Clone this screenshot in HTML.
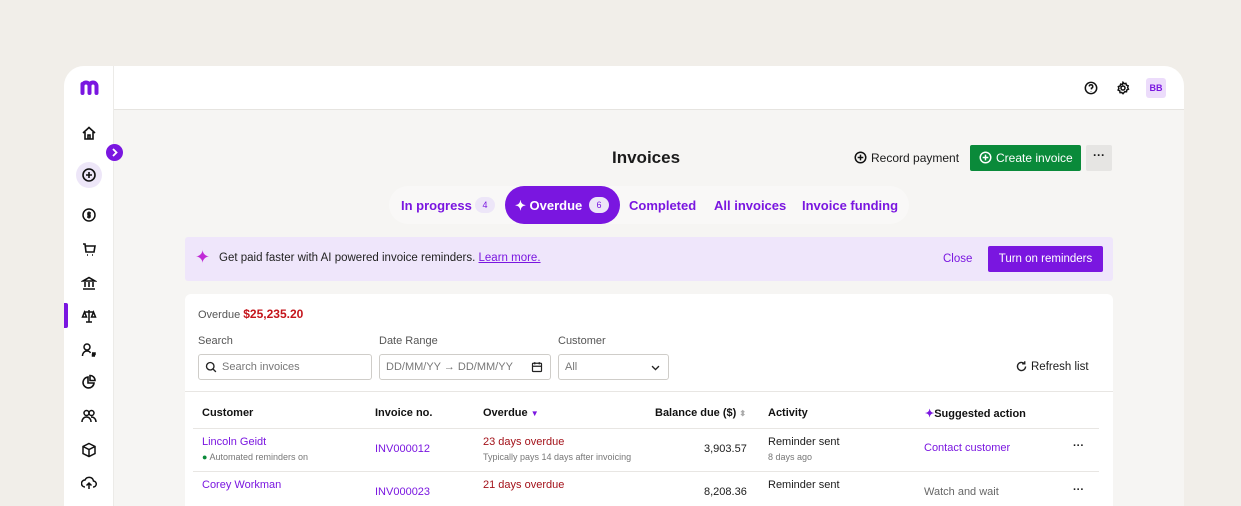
<!DOCTYPE html>
<html><head><meta charset="utf-8"><style>
*{box-sizing:border-box;margin:0;padding:0}
body{width:1241px;height:498px;overflow:hidden;background:#f1eee9;font-family:"Liberation Sans",sans-serif;color:#1b1b1b;position:relative}
.frame{position:absolute;left:64px;top:66px;width:1120px;height:440px;background:#f6f5f3;border-radius:20px 20px 0 0;overflow:hidden}
.side{position:absolute;left:0;top:0;width:50px;height:440px;background:#fff;border-right:1px solid #ecebe8}
.top{position:absolute;left:50px;top:0;right:0;height:44px;background:#fff;border-bottom:1px solid #e6e4e0}
.ic{position:absolute;left:17px;width:16px;height:16px}
.abs{position:absolute}
.purple{color:#7a16e0}
.tabs{position:absolute;left:325px;top:120px;width:520px;height:38px;background:#f9f8f7;border-radius:19px}
.tab{position:absolute;top:12px;font-size:13px;font-weight:bold;color:#7a16e0}
.banner{position:absolute;left:121px;top:171px;width:928px;height:44px;background:#efe6fb;border-radius:3px}
.card{position:absolute;left:121px;top:228px;width:928px;height:230px;background:#fff;border-radius:6px}
.lbl{position:absolute;font-size:11px;color:#555}
.inp{position:absolute;top:60px;height:26px;border:1px solid #cfcdc9;border-radius:3px;font-size:11px;color:#777;padding:6px 6px}
.th{position:absolute;top:113px;font-size:11px;font-weight:bold;color:#111}
.c{position:absolute;font-size:11px}
.s{position:absolute;font-size:9px;color:#777}
</style></head><body>
<div class="frame">
 <div class="side">
  <svg class="abs" style="left:16px;top:14px" width="20" height="15" viewBox="0 0 20 15" fill="none" stroke="#7a16e0" stroke-width="4" stroke-linecap="round"><path d="M2.5 13V6a3.5 3.5 0 0 1 7 0v7M9.5 6a3.5 3.5 0 0 1 7 0v7M2.5 4v9"/></svg>
  <svg class="ic" style="top:59px" viewBox="0 0 16 16" fill="none" stroke="#111" stroke-width="1.6"><path d="M2 8L8 2.5 14 8M4 7v7h8V7M7 14v-4h2v4"/></svg>
  <div class="abs" style="left:12px;top:96px;width:26px;height:26px;border-radius:13px;background:#ede6f8"></div>
  <svg class="ic" style="top:101px" viewBox="0 0 16 16" fill="none" stroke="#111" stroke-width="1.6"><circle cx="8" cy="8" r="6"/><path d="M8 5v6M5 8h6"/></svg>
  <svg class="ic" style="top:141px" viewBox="0 0 16 16" fill="none" stroke="#111" stroke-width="1.5"><circle cx="8" cy="8" r="6"/><path d="M10 6H7v2h2v2H6M8 4.5v7"/></svg>
  <svg class="ic" style="top:175px" viewBox="0 0 16 16" fill="none" stroke="#111" stroke-width="1.6"><path d="M2 3h2l1 8h8l1-6H5M6 14h1M11 14h1"/></svg>
  <svg class="ic" style="top:209px" viewBox="0 0 16 16" fill="none" stroke="#111" stroke-width="1.6"><path d="M2 6L8 2.5 14 6zM4 7v5M8 7v5M12 7v5M2 14h12"/></svg>
  <div class="abs" style="left:0;top:237px;width:4px;height:25px;background:#7a16e0;border-radius:0 2px 2px 0"></div>
  <svg class="ic" style="top:242px" viewBox="0 0 16 16" fill="none" stroke="#111" stroke-width="1.5"><path d="M8 2v12M3 4h10M5 14h6M1.5 9l2-5 2 5zM10.5 9l2-5 2 5z"/></svg>
  <svg class="ic" style="top:276px" viewBox="0 0 16 16" fill="none" stroke="#111" stroke-width="1.5"><circle cx="6" cy="5" r="3"/><path d="M1.5 14c0-3 2-5 4.5-5s3 1 3.5 2M11 11h3v1.5h-2.5V14H14"/></svg>
  <svg class="ic" style="top:308px" viewBox="0 0 16 16" fill="none" stroke="#111" stroke-width="1.6"><path d="M7 3a5.5 5.5 0 1 0 6 6H7zM9 1.5v5h5a5 5 0 0 0-5-5z"/></svg>
  <svg class="ic" style="top:342px" viewBox="0 0 16 16" fill="none" stroke="#111" stroke-width="1.5"><circle cx="5.5" cy="5" r="2.5"/><circle cx="10.5" cy="5" r="2.5"/><path d="M1 14c0-3 2-5 4.5-5s4.5 2 4.5 5M10 9c3 0 5 2 5 5"/></svg>
  <svg class="ic" style="top:376px" viewBox="0 0 16 16" fill="none" stroke="#111" stroke-width="1.5"><path d="M8 1.5l6 3v7l-6 3-6-3v-7zM2 4.5l6 3 6-3M8 7.5v7"/></svg>
  <svg class="ic" style="top:409px" viewBox="0 0 16 16" fill="none" stroke="#111" stroke-width="1.5"><path d="M4 12a3.5 3.5 0 0 1 0-7 4.5 4.5 0 0 1 8.5 1A3 3 0 0 1 12 12M8 14V8M5.5 10.5L8 8l2.5 2.5"/></svg>
 </div>
 <div class="top">
  <svg class="abs" style="left:970px;top:15px" width="14" height="14" viewBox="0 0 16 16" fill="none" stroke="#111" stroke-width="1.7"><circle cx="8" cy="8" r="6.5"/><path d="M6 6.2a2 2 0 1 1 2.5 2V9.5M8 11.5v.5"/></svg>
  <svg class="abs" style="left:1002px;top:15px" width="14" height="14" viewBox="0 0 16 16" fill="none" stroke="#111" stroke-width="1.7"><circle cx="8" cy="8" r="2.3"/><path d="M8 1.5l1.3 1.6 2-.4.6 2 2 .8-.6 2 .9 1.9-1.9.9-.3 2-2-.1L8 14.5l-1.4-1.4-2 .1-.3-2-1.9-.9.9-1.9-.6-2 2-.8.6-2 2 .4z"/></svg>
  <div class="abs" style="left:1032px;top:12px;width:20px;height:20px;background:#ecdcfb;border-radius:3px;font-size:9px;font-weight:bold;color:#7a16e0;text-align:center;line-height:20px">BB</div>
 </div>
 <div class="abs" style="left:42px;top:78px;width:17px;height:17px;border-radius:9px;background:#7a16e0"><svg width="17" height="17" viewBox="0 0 17 17" fill="none" stroke="#fff" stroke-width="1.8"><path d="M7 5l3.5 3.5L7 12"/></svg></div>

 <div class="abs" style="left:548px;top:82px;font-size:17px;font-weight:bold">Invoices</div>
 <svg class="abs" style="left:790px;top:85px" width="13" height="13" viewBox="0 0 16 16" fill="none" stroke="#111" stroke-width="1.8"><circle cx="8" cy="8" r="6.5"/><path d="M8 4.5v7M4.5 8h7"/></svg>
 <div class="abs" style="left:807px;top:85px;font-size:12px">Record payment</div>
 <div class="abs" style="left:906px;top:79px;width:111px;height:26px;background:#0a8a3a;border-radius:2px;color:#fff;font-size:12px;padding:6px 0 0 26px">Create invoice</div>
 <svg class="abs" style="left:915px;top:85px" width="13" height="13" viewBox="0 0 16 16" fill="none" stroke="#fff" stroke-width="1.8"><circle cx="8" cy="8" r="6.5"/><path d="M8 4.5v7M4.5 8h7"/></svg>
 <div class="abs" style="left:1022px;top:79px;width:26px;height:26px;background:#e6e5e3;border-radius:2px;text-align:center;font-size:12px;line-height:20px;font-weight:bold">···</div>

 <div class="tabs">
  <div class="tab" style="left:12px">In progress</div>
  <div class="abs" style="left:86px;top:11px;width:20px;height:16px;background:#ede6f8;border-radius:8px;font-size:9px;color:#7a16e0;text-align:center;line-height:16px">4</div>
  <div class="abs" style="left:116px;top:0;width:115px;height:38px;background:#7a16e0;border-radius:19px"></div>
  <div class="tab" style="left:126px;color:#fff">✦ Overdue</div>
  <div class="abs" style="left:200px;top:11px;width:20px;height:16px;background:#ede6f8;border-radius:8px;font-size:9px;color:#7a16e0;text-align:center;line-height:16px">6</div>
  <div class="tab" style="left:240px">Completed</div>
  <div class="tab" style="left:325px">All invoices</div>
  <div class="tab" style="left:413px">Invoice funding</div>
 </div>

 <div class="banner">
  <div class="abs" style="left:10px;top:10px;font-size:18px;color:#c02ad6;line-height:20px">✦</div>
  <div class="abs" style="left:34px;top:15px;font-size:11.5px;color:#222">Get paid faster with AI powered invoice reminders. <span style="color:#7a16e0;text-decoration:underline">Learn more.</span></div>
  <div class="abs" style="left:758px;top:16px;font-size:11.5px;color:#7a16e0">Close</div>
  <div class="abs" style="left:803px;top:9px;width:115px;height:26px;background:#7a16e0;border-radius:2px;color:#fff;font-size:11.5px;text-align:center;line-height:26px">Turn on reminders</div>
 </div>

 <div class="card">
  <div class="lbl" style="left:13px;top:13px">Overdue <b style="color:#c4141b;font-size:12px">$25,235.20</b></div>
  <div class="lbl" style="left:13px;top:41px">Search</div>
  <div class="lbl" style="left:194px;top:41px">Date Range</div>
  <div class="lbl" style="left:373px;top:41px">Customer</div>
  <div class="inp" style="left:13px;width:174px;padding-left:23px">Search invoices</div>
  <svg class="abs" style="left:20px;top:67px" width="12" height="12" viewBox="0 0 16 16" fill="none" stroke="#222" stroke-width="1.8"><circle cx="7" cy="7" r="5"/><path d="M11 11l3.5 3.5"/></svg>
  <div class="inp" style="left:194px;width:172px">DD/MM/YY → DD/MM/YY</div>
  <svg class="abs" style="left:346px;top:67px" width="12" height="12" viewBox="0 0 16 16" fill="none" stroke="#222" stroke-width="1.6"><rect x="2" y="3" width="12" height="11" rx="1"/><path d="M2 7h12M5 1.5v3M11 1.5v3"/></svg>
  <div class="inp" style="left:373px;width:111px">All</div>
  <svg class="abs" style="left:465px;top:68px" width="11" height="11" viewBox="0 0 16 16" fill="none" stroke="#222" stroke-width="2"><path d="M3 6l5 5 5-5"/></svg>
  <svg class="abs" style="left:830px;top:66px" width="13" height="13" viewBox="0 0 16 16" fill="none" stroke="#222" stroke-width="1.7"><path d="M13 8a5 5 0 1 1-1.5-3.6M12 1.5v3.2H8.8"/></svg>
  <div class="abs" style="left:846px;top:67px;font-size:11.5px">Refresh list</div>
  <div class="abs" style="left:0;top:97px;width:928px;border-top:1px solid #e8e6e3"></div>
  <div class="th" style="left:17px">Customer</div>
  <div class="th" style="left:190px">Invoice no.</div>
  <div class="th" style="left:298px">Overdue <span style="color:#7a16e0;font-size:8px">▼</span></div>
  <div class="th" style="left:470px">Balance due ($) <span style="color:#aaa;font-size:8px">⬍</span></div>
  <div class="th" style="left:583px">Activity</div>
  <div class="th" style="left:740px"><span style="color:#7a16e0">✦</span>Suggested action</div>
  <div class="abs" style="left:8px;top:134px;width:906px;border-top:1px solid #e8e6e3"></div>
  <div class="abs" style="left:8px;top:177px;width:906px;border-top:1px solid #e8e6e3"></div>

  <div class="c purple" style="left:17px;top:142px">Lincoln Geidt</div>
  <div class="s" style="left:17px;top:158px"><span style="color:#0a8a3a">●</span> Automated reminders on</div>
  <div class="c purple" style="left:190px;top:149px">INV000012</div>
  <div class="c" style="left:298px;top:142px;color:#a3121a">23 days overdue</div>
  <div class="s" style="left:298px;top:158px">Typically pays 14 days after invoicing</div>
  <div class="c" style="left:519px;top:149px">3,903.57</div>
  <div class="c" style="left:583px;top:142px">Reminder sent</div>
  <div class="s" style="left:583px;top:158px">8 days ago</div>
  <div class="c purple" style="left:739px;top:148px">Contact customer</div>
  <div class="c" style="left:888px;top:146px;font-weight:bold">···</div>

  <div class="c purple" style="left:17px;top:185px">Corey Workman</div>
  <div class="c purple" style="left:190px;top:192px">INV000023</div>
  <div class="c" style="left:298px;top:185px;color:#a3121a">21 days overdue</div>
  <div class="c" style="left:519px;top:192px">8,208.36</div>
  <div class="c" style="left:583px;top:185px">Reminder sent</div>
  <div class="c" style="left:739px;top:192px;color:#666">Watch and wait</div>
  <div class="c" style="left:888px;top:190px;font-weight:bold">···</div>
 </div>
</div>
</body></html>
